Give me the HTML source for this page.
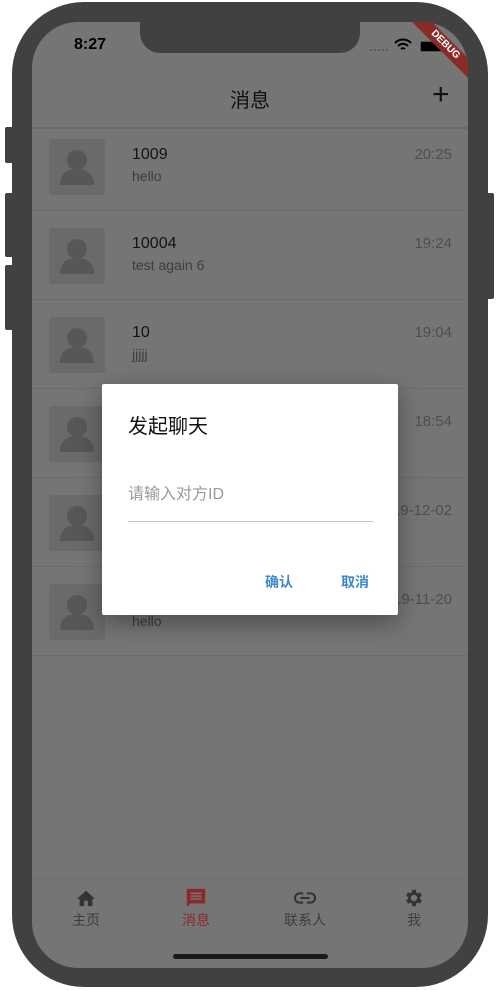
<!DOCTYPE html>
<html><head><meta charset="utf-8"><style>
*{margin:0;padding:0;box-sizing:border-box}
body{width:500px;height:990px;background:#fff;position:relative;overflow:hidden;font-family:"Liberation Sans","Noto Sans CJK SC",sans-serif}
.frame{position:absolute;left:12px;top:2px;width:476px;height:985px;background:#414141;border-radius:72px}
.btn{position:absolute;background:#414141;border-radius:2px}
.screen{position:absolute;left:32px;top:22px;width:436px;height:946px;background:#757575;border-radius:46px;overflow:hidden}
.notch{position:absolute;left:108px;top:0;width:220px;height:31px;background:#414141;border-radius:0 0 20px 20px}
.abs{position:absolute}
.row{position:absolute;left:0;width:436px;height:89px}
.dv{position:absolute;left:0;width:436px;height:1px;background:#6c6c6c}
.av{position:absolute;left:17px;top:10px;width:56px;height:56px;background:#6a6a6a;border-radius:3px}
.nm{position:absolute;left:100px;top:17px;font-size:16px;color:#141414}
.sb{position:absolute;left:100px;top:39px;font-size:14px;color:#3c3c3c}
.tm{position:absolute;right:16px;top:17px;font-size:15px;color:#4e4e4e}
.nav{position:absolute;top:862px;width:80px;text-align:center;font-size:14px;color:#3d3d3d}
</style></head><body>
<div class="btn" style="left:5px;top:127px;width:8px;height:36px"></div>
<div class="btn" style="left:5px;top:193px;width:8px;height:64px"></div>
<div class="btn" style="left:5px;top:265px;width:8px;height:65px"></div>
<div class="btn" style="left:487px;top:193px;width:7px;height:106px"></div>
<div class="frame"></div>
<div class="screen">
  <div class="notch"></div>
  <div class="abs" style="left:42px;top:14px;font-size:16px;font-weight:bold;color:#000">8:27</div>
  <div class="abs" style="left:338px;top:27px;width:18px;height:2px;border-top:2px dotted #5a5a5a"></div>
  <svg class="abs" style="left:362px;top:16px" width="18" height="14" viewBox="0 0 18 14"><path d="M1 5a11 11 0 0 1 16 0M4 8a7 7 0 0 1 10 0M7 11a3 3 0 0 1 4 0" stroke="#000" stroke-width="2" fill="none"/></svg>
  <div class="abs" style="left:388px;top:19px;width:22px;height:11px;background:#000;border-radius:2px;border:1px solid #555"></div>
  <div class="abs" style="left:353px;top:16px;width:120px;height:14px;background:#8a2b27;transform:rotate(45deg);color:#fff;font-size:10px;font-weight:bold;text-align:center;line-height:14px">DEBUG</div>
  <div class="abs" style="left:0;top:62px;width:436px;text-align:center;font-size:20px;color:#111">消息</div>
  <div class="abs" style="left:400px;top:56px;font-size:30px;color:#111;line-height:34px">+</div>
  <div class="abs" style="left:0;top:105px;width:436px;height:2px;background:#6a6a6a"></div>
  <div id="rows"></div>
  <div class="abs" style="left:0;top:856px;width:436px;height:1px;background:#6e6e6e"></div>
  <div class="nav" style="left:14px"><svg width="22" height="20" viewBox="0 0 24 22" style="display:block;margin:4px auto 2px"><path d="M10 20v-6h4v6h5v-8h3L12 3 2 12h3v8z" fill="#333"/></svg>主页</div>
  <div class="nav" style="left:124px;color:#8b2b27"><svg width="22" height="22" viewBox="0 0 24 24" style="display:block;margin:3px auto 1px"><path d="M2 2h20v16H6l-4 4z" fill="#8b2b27"/><path d="M6 7h12M6 10h12M6 13h12" stroke="#757575" stroke-width="1.6"/></svg>消息</div>
  <div class="nav" style="left:233px"><svg width="22" height="20" viewBox="0 0 24 20" style="display:block;margin:4px auto 2px"><path d="M10 5H6a5 5 0 0 0 0 10h4M14 5h4a5 5 0 0 1 0 10h-4M7 10h10" stroke="#333" stroke-width="2.2" fill="none"/></svg>联系人</div>
  <div class="nav" style="left:342px"><svg width="22" height="22" viewBox="0 0 24 24" style="display:block;margin:3px auto 1px"><path d="M19.4 13a7.5 7.5 0 0 0 0-2l2.1-1.6-2-3.5-2.5 1a7 7 0 0 0-1.7-1L15 3h-4l-.4 2.9a7 7 0 0 0-1.7 1l-2.5-1-2 3.5L6.6 11a7.5 7.5 0 0 0 0 2l-2.1 1.6 2 3.5 2.5-1a7 7 0 0 0 1.7 1L11 21h4l.4-2.9a7 7 0 0 0 1.7-1l2.5 1 2-3.5zM13 15.5a3.5 3.5 0 1 1 0-7 3.5 3.5 0 0 1 0 7z" fill="#333" transform="translate(-1 0)"/></svg>我</div>
  <div class="abs" style="left:141px;top:932px;width:155px;height:5px;background:#1a1a1a;border-radius:3px"></div>
  <div class="abs" style="left:70px;top:362px;width:296px;height:231px;background:#fff;border-radius:2px;box-shadow:0 8px 24px rgba(0,0,0,.35)">
    <div class="abs" style="left:26px;top:26px;font-size:20px;color:#111">发起聊天</div>
    <div class="abs" style="left:26px;top:96px;font-size:16px;color:#9a9a9a">请输入对方ID</div>
    <div class="abs" style="left:26px;top:137px;width:245px;height:1px;background:#c4c4c4"></div>
    <div class="abs" style="left:163px;top:188px;font-size:14px;font-weight:bold;color:#3b88cc">确认</div>
    <div class="abs" style="left:239px;top:188px;font-size:14px;font-weight:bold;color:#3b88cc">取消</div>
  </div>
</div>
<script>
var d=[["1009","hello","20:25"],["10004","test again 6","19:24"],["10","jjjjj","19:04"],["","","18:54"],["","","2019-12-02"],["","hello","2019-11-20"]],h="";
d.forEach(function(r,i){h+='<div class="row" style="top:'+(107+i*89)+'px"><div class="av"><svg width="56" height="56" viewBox="0 0 56 56"><circle cx="28" cy="21" r="10" fill="#575757"/><path d="M11 46c0-12 8-16 17-16s17 4 17 16z" fill="#575757"/></svg></div><div class="nm">'+r[0]+'</div><div class="sb">'+r[1]+'</div><div class="tm">'+r[2]+'</div></div><div class="dv" style="top:'+(188+i*89)+'px"></div>'});
document.getElementById('rows').outerHTML=h;
</script>
</body></html>
